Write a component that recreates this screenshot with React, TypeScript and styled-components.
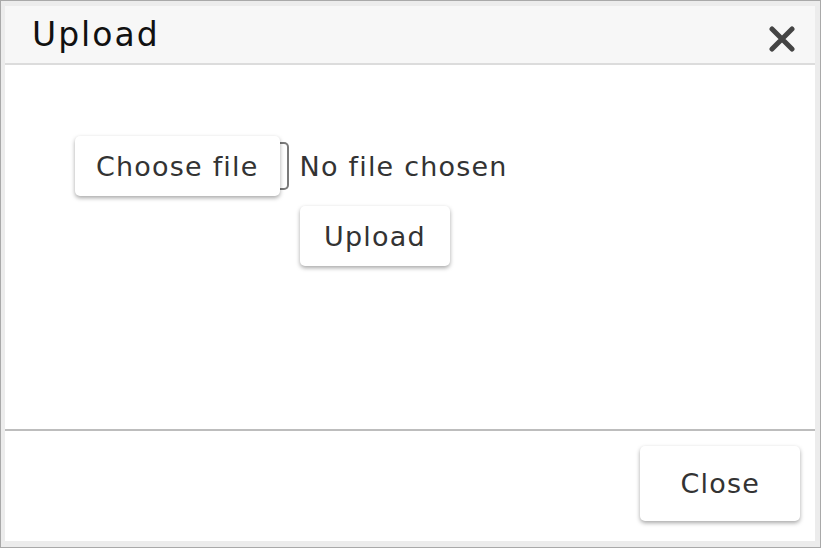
import React from "react";
import styled, { createGlobalStyle, css } from "styled-components";

const font = `"DejaVu Sans", "Noto Sans", sans-serif`;

const GlobalStyle = createGlobalStyle`
  html, body {
    margin: 0;
    padding: 0;
    background: #ffffff;
  }
  body {
    font-family: ${font};
    color: #333333;
  }
`;

const Frame = styled.div`
  box-sizing: border-box;
  width: 821px;
  height: 548px;
  border: 1px solid #a9a9a9;
  background: #ececec;
  padding: 5px 5px 6px 4px;
  display: flex;
`;

const Dialog = styled.div`
  flex: 1;
  display: flex;
  flex-direction: column;
  background: #ffffff;
`;

const Header = styled.div`
  height: 57px;
  background: #f7f7f7;
  border-bottom: 2px solid #dcdcdc;
  display: flex;
  align-items: center;
  justify-content: space-between;
  padding: 0 20px 0 27px;
`;

const Title = styled.h1`
  margin: 0;
  font-family: ${font};
  font-weight: normal;
  font-size: 33px;
  letter-spacing: 2px;
  color: #111111;
`;

const CloseIcon = styled.button`
  border: none;
  background: none;
  padding: 0;
  margin-top: 8px;
  width: 26px;
  height: 26px;
  display: flex;
  cursor: pointer;
`;

const Body = styled.div`
  flex: 1;
  padding: 77px 0 0 71px;
  display: flex;
  flex-direction: column;
  align-items: flex-start;
`;

const FileRow = styled.label`
  display: flex;
  align-items: center;
`;

const FileBox = styled.span`
  display: flex;
  align-items: center;
  box-sizing: border-box;
  height: 48px;
  border: 2px solid #7a7a7a;
  border-left: none;
  border-radius: 0 5px 5px 0;
  padding-right: 7px;
`;

const buttonStyle = css`
  font-family: ${font};
  font-size: 27px;
  letter-spacing: 1.2px;
  color: #333333;
  background: #ffffff;
  border: none;
  border-radius: 5px;
  box-shadow: 0 2px 4px rgba(0, 0, 0, 0.35);
  cursor: pointer;
  white-space: nowrap;
  display: inline-flex;
  align-items: center;
  justify-content: center;
  box-sizing: border-box;
`;

const Button = styled.button<{ $size?: "md" | "lg" }>`
  ${buttonStyle}
  height: ${p => (p.$size === "lg" ? "75px" : "60px")};
  padding: 0 ${p => (p.$size === "lg" ? "40px" : "21px")};
`;

const PickButton = styled(Button)`
  margin: -6px 0 -6px -1px;
`;

const FileName = styled.span`
  margin-left: 11px;
  font-size: 27px;
  letter-spacing: 1.2px;
  color: #333333;
`;

const UploadRow = styled.div`
  margin: 16px 0 0 224px;

  & > button {
    padding: 0 24px;
  }
`;

const Footer = styled.div`
  height: 112px;
  border-top: 2px solid #bdbdbd;
  box-sizing: border-box;
  display: flex;
  justify-content: flex-end;
  align-items: flex-start;
  padding: 15px 15px 0 0;
`;

const XIcon = () => (
  <svg width="26" height="26" viewBox="0 0 26 26">
    <path
      d="M3 3 L23 23 M23 3 L3 23"
      stroke="#444444"
      strokeWidth="5"
      strokeLinecap="round"
    />
  </svg>
);

export default function App() {
  return (
    <>
      <GlobalStyle />
      <Frame>
        <Dialog>
          <Header>
            <Title>Upload</Title>
            <CloseIcon aria-label="Close">
              <XIcon />
            </CloseIcon>
          </Header>
          <Body>
            <FileRow>
              <FileBox>
                <PickButton as="span">Choose file</PickButton>
              </FileBox>
              <FileName>No file chosen</FileName>
            </FileRow>
            <UploadRow>
              <Button>Upload</Button>
            </UploadRow>
          </Body>
          <Footer>
            <Button $size="lg">Close</Button>
          </Footer>
        </Dialog>
      </Frame>
    </>
  );
}
